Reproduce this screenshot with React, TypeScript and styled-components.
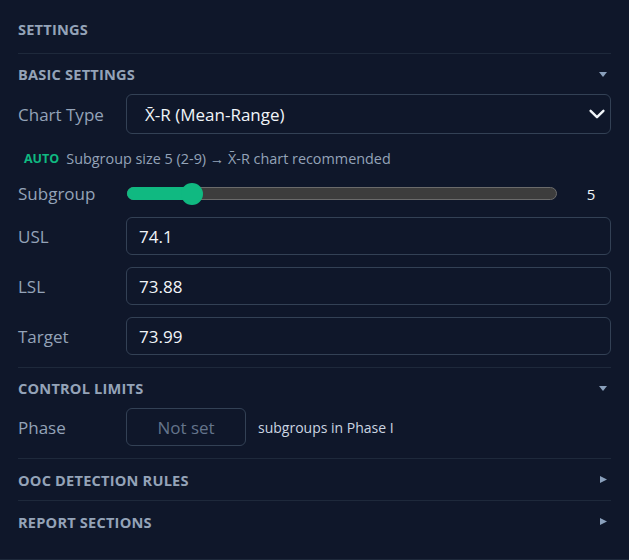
import { createGlobalStyle } from "styled-components";
import styled from "styled-components";
import type { FC, ReactNode } from "react";

const GlobalStyle = createGlobalStyle`
  html, body {
    margin: 0;
    padding: 0;
    background: #0f172a;
  }
  body {
    font-family: "Open Sans", "Noto Sans", sans-serif;
    -webkit-font-smoothing: antialiased;
  }
`;

const Panel = styled.div`
  box-sizing: border-box;
  width: 629px;
  min-height: 560px;
  padding: 0 18px 17px;
  background: #0f172a;
  border-bottom: 1px solid #1e293b;
`;

const Title = styled.div`
  padding: 20px 0 15px;
  font-size: 14.6px;
  line-height: 18px;
  font-weight: 700;
  color: #94a3b8;
  letter-spacing: 0.2px;
  border-bottom: 1px solid #1e293b;
`;

const Section = styled.section<{ $last?: boolean; $open?: boolean }>`
  padding-bottom: ${(p) => (p.$open ? "12px" : "0")};
  border-bottom: ${(p) => (p.$last ? "none" : "1px solid #1e293b")};
`;

const SectionHeader = styled.div<{ $open?: boolean }>`
  display: flex;
  align-items: center;
  justify-content: space-between;
  height: ${(p) => (p.$open ? "40px" : "41px")};
  font-size: 14.6px;
  font-weight: 700;
  color: #94a3b8;
  letter-spacing: 0.2px;
`;

const Caret = styled.svg`
  margin-right: 4px;
  flex-shrink: 0;
`;

const Rows = styled.div`
  display: flex;
  flex-direction: column;
  gap: 12px;
`;

const Row = styled.div<{ $height?: number }>`
  display: flex;
  align-items: center;
  height: ${(p) => (p.$height ? `${p.$height}px` : "auto")};
`;

const Label = styled.div`
  width: 108px;
  flex-shrink: 0;
  font-size: 17px;
  color: #94a3b8;
`;

const SelectBox = styled.div`
  box-sizing: border-box;
  flex: 1;
  height: 40px;
  display: flex;
  align-items: center;
  justify-content: space-between;
  padding: 0 2px 0 18px;
  border: 1px solid #334155;
  border-radius: 6px;
  font-size: 17px;
  color: #f1f5f9;
`;

const TextInput = styled.div<{ $width?: number; $placeholder?: boolean }>`
  box-sizing: border-box;
  ${(p) => (p.$width ? `width: ${p.$width}px;` : "flex: 1;")}
  height: 38px;
  display: flex;
  align-items: center;
  justify-content: ${(p) => (p.$placeholder ? "center" : "flex-start")};
  padding: 0 12px;
  border: 1px solid #334155;
  border-radius: 6px;
  font-size: 17px;
  color: ${(p) => (p.$placeholder ? "#64748b" : "#f1f5f9")};
`;

const Hint = styled.div`
  height: 24px;
  display: flex;
  align-items: center;
  gap: 7px;
  padding-left: 6px;
  font-size: 14.4px;
  color: #94a3b8;
`;

const AutoTag = styled.span`
  font-size: 12.5px;
  font-weight: 700;
  color: #10b981;
`;

const SliderWrap = styled.div`
  flex: 1;
  display: flex;
  align-items: center;
  gap: 14px;
  padding-left: 1px;
`;

const Track = styled.div`
  position: relative;
  box-sizing: border-box;
  flex: 1;
  height: 13px;
  border: 1px solid #6b6b6b;
  border-radius: 7px;
  background: #3d3d3d;
`;

const Fill = styled.div`
  position: absolute;
  left: -1px;
  top: -1px;
  bottom: -1px;
  border-radius: 7px;
  background: #10b981;
`;

const Thumb = styled.div`
  position: absolute;
  top: 50%;
  width: 22px;
  height: 22px;
  margin: -11px 0 0 -11px;
  border-radius: 50%;
  background: #10b981;
`;

const SliderValue = styled.div`
  width: 40px;
  text-align: center;
  font-size: 15px;
  color: #f1f5f9;
`;

const Note = styled.div`
  margin-left: 12px;
  font-size: 14px;
  color: #cbd5e1;
`;

const Chevron = () => (
  <svg width="22" height="22" viewBox="0 0 24 24" fill="none" stroke="#f1f5f9" strokeWidth="2.6" strokeLinecap="round" strokeLinejoin="round">
    <path d="M5 8.5l7 7 7-7" />
  </svg>
);

const SectionBlock: FC<{ title: string; open?: boolean; last?: boolean; children?: ReactNode }> = ({
  title,
  open,
  last,
  children,
}) => (
  <Section $open={open} $last={last}>
    <SectionHeader $open={open}>
      <span>{title}</span>
      {open ? (
        <Caret width="8" height="5" viewBox="0 0 8 5">
          <polygon points="0,0 8,0 4,5" fill="#8aa0bc" />
        </Caret>
      ) : (
        <Caret width="7" height="7" viewBox="0 0 7 7">
          <polygon points="0,0 7,3.5 0,7" fill="#8aa0bc" />
        </Caret>
      )}
    </SectionHeader>
    {children}
  </Section>
);

const SubgroupSlider: FC<{ value: number; min: number; max: number }> = ({ value, min, max }) => {
  const pct = (value - min) / (max - min);
  const pos = `calc(11px + (100% - 22px) * ${pct})`;
  return (
    <SliderWrap>
      <Track>
        <Fill style={{ width: `calc(${pos} + 1px)` }} />
        <Thumb style={{ left: pos }} />
      </Track>
      <SliderValue>{value}</SliderValue>
    </SliderWrap>
  );
};

export default function App() {
  return (
    <>
      <GlobalStyle />
      <Panel>
        <Title>SETTINGS</Title>

        <SectionBlock title="BASIC SETTINGS" open>
          <Rows>
            <Row>
              <Label>Chart Type</Label>
              <SelectBox>
                <span>X̄-R (Mean-Range)</span>
                <Chevron />
              </SelectBox>
            </Row>
            <Hint>
              <AutoTag>AUTO</AutoTag>
              <span>Subgroup size 5 (2-9) → X̄-R chart recommended</span>
            </Hint>
            <Row $height={23}>
              <Label>Subgroup</Label>
              <SubgroupSlider value={5} min={2} max={25} />
            </Row>
            <Row>
              <Label>USL</Label>
              <TextInput>74.1</TextInput>
            </Row>
            <Row>
              <Label>LSL</Label>
              <TextInput>73.88</TextInput>
            </Row>
            <Row>
              <Label>Target</Label>
              <TextInput>73.99</TextInput>
            </Row>
          </Rows>
        </SectionBlock>

        <SectionBlock title="CONTROL LIMITS" open>
          <Row>
            <Label>Phase</Label>
            <TextInput $width={120} $placeholder>
              Not set
            </TextInput>
            <Note>subgroups in Phase I</Note>
          </Row>
        </SectionBlock>

        <SectionBlock title="OOC DETECTION RULES" />
        <SectionBlock title="REPORT SECTIONS" last />
      </Panel>
    </>
  );
}
